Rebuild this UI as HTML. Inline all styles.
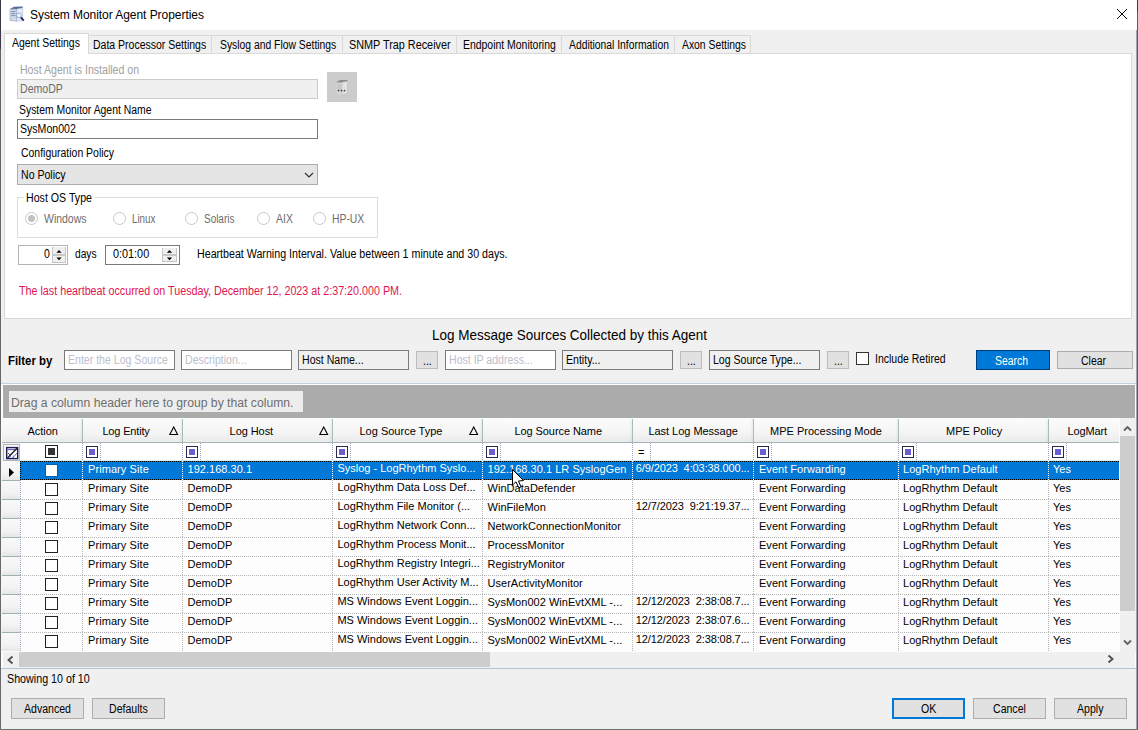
<!DOCTYPE html>
<html><head><meta charset="utf-8"><title>System Monitor Agent Properties</title>
<style>
html,body{margin:0;padding:0}
body{width:1138px;height:730px;position:relative;overflow:hidden;background:#f0f0f0;font-family:"Liberation Sans", sans-serif;font-size:11px;color:#000}
.a{position:absolute}
.t{line-height:1;white-space:nowrap}
.d{transform-origin:0 0}
</style></head><body>
<div class="a" style="left:0px;top:0px;width:1138px;height:30px;background:#ffffff;"></div>
<svg class="a" style="left:9px;top:6px" width="17" height="17" viewBox="0 0 17 17">
<path d="M1 3 L5 1 L13.7 0.8 L13.7 14.6 L7.5 15.2 L1 14.4 Z" fill="#dfe6f2"/>
<path d="M1 3 L5 0.8 L13.7 0.6 L13.7 2 L7.5 3.2 L1 3.2 Z" fill="#5a6a9c"/>
<path d="M7.5 3.2 L13.7 2 L13.7 14.6 L7.5 15.2 Z" fill="#e6ecf8" stroke="#b0bcd8" stroke-width="0.6"/>
<path d="M1 3.2 L7.5 3.2 L7.5 15.2 L1 14.4 Z" fill="#cfd8e8" stroke="#9aa6c4" stroke-width="0.6"/>
<path d="M2.2 5.5 L6.5 5.5 M2.2 7.6 L6.5 7.6 M2.2 9.6 L6.5 9.6" stroke="#7c86a8" stroke-width="0.9"/>
<circle cx="9.9" cy="9.3" r="2.4" fill="#e4fafa" stroke="#8090c0" stroke-width="0.7"/>
<path d="M11.8 11.4 L14.8 14.6" stroke="#202060" stroke-width="1.8"/>
</svg>
<div class="a t" style="left:30px;top:9px;font-size:12px;letter-spacing:-0.05px;">System Monitor Agent Properties</div>
<svg class="a" style="left:1116px;top:8px" width="12" height="12" viewBox="0 0 12 12"><path d="M1 1 L11 11 M11 1 L1 11" stroke="#000" stroke-width="1"/></svg>
<div class="a" style="left:88px;top:35px;width:124px;height:19px;box-sizing:border-box;border:1px solid #d9d9d9;border-left:none;background:#f0f0f0"></div>
<div class="a" style="left:212px;top:35px;width:131px;height:19px;box-sizing:border-box;border:1px solid #d9d9d9;border-left:none;background:#f0f0f0"></div>
<div class="a" style="left:343px;top:35px;width:114px;height:19px;box-sizing:border-box;border:1px solid #d9d9d9;border-left:none;background:#f0f0f0"></div>
<div class="a" style="left:457px;top:35px;width:105px;height:19px;box-sizing:border-box;border:1px solid #d9d9d9;border-left:none;background:#f0f0f0"></div>
<div class="a" style="left:562px;top:35px;width:113px;height:19px;box-sizing:border-box;border:1px solid #d9d9d9;border-left:none;background:#f0f0f0"></div>
<div class="a" style="left:675px;top:35px;width:76px;height:19px;box-sizing:border-box;border:1px solid #d9d9d9;border-left:none;background:#f0f0f0"></div>
<div class="a" style="left:4px;top:53px;width:1128px;height:266px;box-sizing:border-box;border:1px solid #d9d9d9;background:#fff"></div>
<div class="a" style="left:4px;top:33px;width:85px;height:21px;box-sizing:border-box;border:1px solid #d9d9d9;border-bottom:none;background:#fff"></div>
<div class="a t d" style="left:12.30px;top:37px;font-size:12px;transform:scaleX(0.8698);">Agent Settings</div>
<div class="a t d" style="left:93.40px;top:39px;font-size:12px;transform:scaleX(0.8748);">Data Processor Settings</div>
<div class="a t d" style="left:219.70px;top:39px;font-size:12px;transform:scaleX(0.8631);">Syslog and Flow Settings</div>
<div class="a t d" style="left:349.40px;top:39px;font-size:12px;transform:scaleX(0.9032);">SNMP Trap Receiver</div>
<div class="a t d" style="left:463.30px;top:39px;font-size:12px;transform:scaleX(0.8694);">Endpoint Monitoring</div>
<div class="a t d" style="left:568.90px;top:39px;font-size:12px;transform:scaleX(0.8606);">Additional Information</div>
<div class="a t d" style="left:682.00px;top:39px;font-size:12px;transform:scaleX(0.8643);">Axon Settings</div>
<div class="a t d" style="left:20.00px;top:64px;font-size:12px;transform:scaleX(0.8787);color:#a0a0a0;">Host Agent is Installed on</div>
<div class="a" style="left:17px;top:79px;width:301px;height:20px;background:#f0f0f0;box-sizing:border-box;border:1px solid #cccccc;"></div>
<div class="a t d" style="left:20.00px;top:83px;font-size:12px;transform:scaleX(0.8800);color:#6d6d6d;">DemoDP</div>
<div class="a" style="left:327px;top:72px;width:30px;height:30px;background:#cccccc;"></div>
<svg class="a" style="left:336px;top:79px" width="13" height="17" viewBox="0 0 13 17">
<path d="M0.5 3 L4 1 L11.5 1 L11.5 14.5 L6 16 L0.5 14.5 Z" fill="#d6d6d6"/>
<path d="M0.5 3 L4 1 L11.5 1 L11.5 2.2 L6 3.4 L0.5 3.4 Z" fill="#8c8c8c"/>
<path d="M6 3.4 L11.5 2.2 L11.5 14.5 L6 16 Z" fill="#e2e2e2" stroke="#b4b4b4" stroke-width="0.5"/>
<path d="M1.5 6 L5 6 M1.5 8 L5 8 M1.5 10 L5 10" stroke="#a8a8a8" stroke-width="0.7"/>
<circle cx="2.5" cy="11.6" r="0.9" fill="#4a3a3a"/><circle cx="5.5" cy="11.6" r="0.9" fill="#3a3a4a"/><circle cx="8.5" cy="11.6" r="0.9" fill="#4a3a3a"/>
</svg>
<div class="a t d" style="left:19.30px;top:104px;font-size:12px;transform:scaleX(0.8675);">System Monitor Agent Name</div>
<div class="a" style="left:17px;top:119px;width:301px;height:20px;background:#ffffff;box-sizing:border-box;border:1px solid #7a7a7a;"></div>
<div class="a t d" style="left:20.00px;top:123px;font-size:12px;transform:scaleX(0.8800);">SysMon002</div>
<div class="a t d" style="left:21.40px;top:147px;font-size:12px;transform:scaleX(0.8713);">Configuration Policy</div>
<div class="a" style="left:17px;top:164px;width:301px;height:21px;background:#e5e5e5;box-sizing:border-box;border:1px solid #adadad;"></div>
<div class="a t d" style="left:21.40px;top:169px;font-size:12px;transform:scaleX(0.8800);">No Policy</div>
<svg class="a" style="left:304px;top:172px" width="10" height="6" viewBox="0 0 10 6"><path d="M1 1 L5 5 L9 1" fill="none" stroke="#303030" stroke-width="1.2"/></svg>
<div class="a" style="left:17px;top:197px;width:361px;height:41px;box-sizing:border-box;border:1px solid #dcdcdc;"></div>
<div class="a" style="left:24px;top:190px;width:70px;height:12px;background:#fff"></div>
<div class="a t d" style="left:26.40px;top:192px;font-size:12px;transform:scaleX(0.8861);">Host OS Type</div>
<div class="a" style="left:24.9px;top:211.8px;width:13px;height:13px;box-sizing:border-box;border:1px solid #c8c8c8;border-radius:50%;background:#fff"></div>
<div class="a" style="left:27.9px;top:214.8px;width:7px;height:7px;border-radius:50%;background:#c2c2c2"></div>
<div class="a t d" style="left:44.20px;top:213px;font-size:12px;transform:scaleX(0.8729);color:#6d6d6d;">Windows</div>
<div class="a" style="left:112.9px;top:211.8px;width:13px;height:13px;box-sizing:border-box;border:1px solid #c8c8c8;border-radius:50%;background:#fff"></div>
<div class="a t d" style="left:132.40px;top:213px;font-size:12px;transform:scaleX(0.8157);color:#6d6d6d;">Linux</div>
<div class="a" style="left:184.9px;top:211.8px;width:13px;height:13px;box-sizing:border-box;border:1px solid #c8c8c8;border-radius:50%;background:#fff"></div>
<div class="a t d" style="left:204.00px;top:213px;font-size:12px;transform:scaleX(0.8286);color:#6d6d6d;">Solaris</div>
<div class="a" style="left:256.9px;top:211.8px;width:13px;height:13px;box-sizing:border-box;border:1px solid #c8c8c8;border-radius:50%;background:#fff"></div>
<div class="a t d" style="left:276.00px;top:213px;font-size:12px;transform:scaleX(0.8737);color:#6d6d6d;">AIX</div>
<div class="a" style="left:312.8px;top:211.8px;width:13px;height:13px;box-sizing:border-box;border:1px solid #c8c8c8;border-radius:50%;background:#fff"></div>
<div class="a t d" style="left:332.20px;top:213px;font-size:12px;transform:scaleX(0.8649);color:#6d6d6d;">HP-UX</div>
<div class="a" style="left:18px;top:245px;width:50px;height:20px;background:#fff;box-sizing:border-box;border:1px solid #b4b4b4;"></div>
<div class="a t d" style="left:44.12px;top:248px;font-size:12px;transform:scaleX(0.8800);">0</div>
<svg class="a" style="left:52px;top:247px" width="14" height="16" viewBox="0 0 14 16"><rect x="0" y="0" width="14" height="16" fill="#efefef"/><path d="M0.5 0 L0.5 16 M13.5 0 L13.5 16 M0 15.5 L14 15.5" stroke="#c4c4c4" stroke-width="1"/><rect x="0" y="7.0" width="14" height="2" fill="#c8c8c8"/><path d="M4.4 5.8 L7.0 3.0 L9.6 5.8 Z M4.4 10.4 L7.0 13.2 L9.6 10.4 Z" fill="#000"/></svg>
<div class="a t d" style="left:74.70px;top:248px;font-size:12px;transform:scaleX(0.8518);">days</div>
<div class="a" style="left:105px;top:245px;width:75px;height:20px;background:#fff;box-sizing:border-box;border:1px solid #7a7a7a;"></div>
<div class="a t d" style="left:112.50px;top:248px;font-size:12px;transform:scaleX(0.9039);">0:01:00</div>
<svg class="a" style="left:162px;top:248px" width="15" height="14" viewBox="0 0 15 14"><rect x="0" y="0" width="15" height="14" fill="#efefef"/><path d="M0.5 0 L0.5 14 M14.5 0 L14.5 14 M0 13.5 L15 13.5" stroke="#c4c4c4" stroke-width="1"/><rect x="0" y="6.0" width="15" height="2" fill="#c8c8c8"/><path d="M4.9 4.8 L7.5 2.0 L10.1 4.8 Z M4.9 9.4 L7.5 12.2 L10.1 9.4 Z" fill="#000"/></svg>
<div class="a t d" style="left:196.60px;top:248px;font-size:12px;transform:scaleX(0.8883);">Heartbeat Warning Interval. Value between 1 minute and 30 days.</div>
<div class="a t d" style="left:19.20px;top:285px;font-size:12px;transform:scaleX(0.8948);color:#e01450;">The last heartbeat occurred on Tuesday, December 12, 2023 at 2:37:20.000 PM.</div>
<div class="a t d" style="left:431.50px;top:328px;font-size:14.5px;transform:scaleX(0.9296);">Log Message Sources Collected by this Agent</div>
<div class="a t d" style="left:8.30px;top:355px;font-size:12px;transform:scaleX(0.9489);font-weight:bold;">Filter by</div>
<div class="a" style="left:64px;top:350px;width:111px;height:20px;background:#fff;box-sizing:border-box;border:1px solid #7a7a7a;"></div>
<div class="a t d" style="left:67.50px;top:354px;font-size:12px;transform:scaleX(0.8800);color:#bcc0cc;">Enter the Log Source</div>
<div class="a" style="left:181px;top:350px;width:111px;height:20px;background:#fff;box-sizing:border-box;border:1px solid #7a7a7a;"></div>
<div class="a t d" style="left:184.50px;top:354px;font-size:12px;transform:scaleX(0.8800);color:#bcc0cc;">Description...</div>
<div class="a" style="left:298px;top:350px;width:111px;height:20px;background:#f0f0f0;box-sizing:border-box;border:1px solid #7a7a7a;"></div>
<div class="a t d" style="left:301.50px;top:354px;font-size:12px;transform:scaleX(0.8800);">Host Name...</div>
<div class="a" style="left:416px;top:351px;width:22px;height:18px;background:#e1e1e1;box-sizing:border-box;border:1px solid #bdbdbd;"></div>
<div class="a t d" style="left:422.89px;top:355px;font-size:12px;transform:scaleX(0.8800);">...</div>
<div class="a" style="left:445px;top:350px;width:111px;height:20px;background:#fff;box-sizing:border-box;border:1px solid #7a7a7a;"></div>
<div class="a t d" style="left:448.50px;top:354px;font-size:12px;transform:scaleX(0.8800);color:#bcc0cc;">Host IP address...</div>
<div class="a" style="left:562px;top:350px;width:111px;height:20px;background:#f0f0f0;box-sizing:border-box;border:1px solid #7a7a7a;"></div>
<div class="a t d" style="left:565.50px;top:354px;font-size:12px;transform:scaleX(0.8800);">Entity...</div>
<div class="a" style="left:680px;top:351px;width:22px;height:18px;background:#e1e1e1;box-sizing:border-box;border:1px solid #bdbdbd;"></div>
<div class="a t d" style="left:686.89px;top:355px;font-size:12px;transform:scaleX(0.8800);">...</div>
<div class="a" style="left:709px;top:350px;width:111px;height:20px;background:#f0f0f0;box-sizing:border-box;border:1px solid #7a7a7a;"></div>
<div class="a t d" style="left:712.50px;top:354px;font-size:12px;transform:scaleX(0.8800);">Log Source Type...</div>
<div class="a" style="left:827px;top:351px;width:22px;height:18px;background:#e1e1e1;box-sizing:border-box;border:1px solid #bdbdbd;"></div>
<div class="a t d" style="left:833.89px;top:355px;font-size:12px;transform:scaleX(0.8800);">...</div>
<div class="a" style="left:856px;top:352px;width:13px;height:13px;background:#fff;box-sizing:border-box;border:1px solid #333;"></div>
<div class="a t d" style="left:875.40px;top:353px;font-size:12px;transform:scaleX(0.8746);">Include Retired</div>
<div class="a" style="left:976px;top:350px;width:74px;height:20px;background:#0078d7;box-sizing:border-box;border:1px solid #003e7a;"></div>
<div class="a t d" style="left:995.40px;top:355px;font-size:12px;transform:scaleX(0.8677);color:#fff;">Search</div>
<div class="a" style="left:1057px;top:351px;width:76px;height:18px;background:#e1e1e1;box-sizing:border-box;border:1px solid #adadad;"></div>
<div class="a t d" style="left:1081.00px;top:355px;font-size:12px;transform:scaleX(0.8715);">Clear</div>
<div class="a" style="left:1px;top:383px;width:1135px;height:1px;background:#c6d2dc"></div>
<div class="a" style="left:1px;top:384px;width:1135px;height:284px;background:#fdfdfd;"></div>
<div class="a" style="left:3px;top:385px;width:1132px;height:33px;background:#ababab;"></div>
<div class="a" style="left:9px;top:391px;width:294px;height:21px;background:#ededed;"></div>
<div class="a t d" style="left:11.30px;top:397px;font-size:12px;transform:scaleX(1.0156);color:#6d6d6d;">Drag a column header here to group by that column.</div>
<div class="a" style="left:2px;top:418px;width:1117px;height:25px;background:linear-gradient(#fcfcfc,#f5f5f5 60%,#eaeaea);box-sizing:border-box;border-bottom:1px solid #a4b6b6"></div>
<div class="a" style="left:79px;top:419px;width:3px;height:23px;background:linear-gradient(to right,rgba(0,0,0,0),rgba(0,0,0,0.05))"></div>
<div class="a" style="left:82px;top:419px;width:1px;height:23px;background:#a9bcbc"></div>
<div class="a" style="left:179px;top:419px;width:3px;height:23px;background:linear-gradient(to right,rgba(0,0,0,0),rgba(0,0,0,0.05))"></div>
<div class="a" style="left:182px;top:419px;width:1px;height:23px;background:#a9bcbc"></div>
<div class="a" style="left:329px;top:419px;width:3px;height:23px;background:linear-gradient(to right,rgba(0,0,0,0),rgba(0,0,0,0.05))"></div>
<div class="a" style="left:332px;top:419px;width:1px;height:23px;background:#a9bcbc"></div>
<div class="a" style="left:479px;top:419px;width:3px;height:23px;background:linear-gradient(to right,rgba(0,0,0,0),rgba(0,0,0,0.05))"></div>
<div class="a" style="left:482px;top:419px;width:1px;height:23px;background:#a9bcbc"></div>
<div class="a" style="left:629px;top:419px;width:3px;height:23px;background:linear-gradient(to right,rgba(0,0,0,0),rgba(0,0,0,0.05))"></div>
<div class="a" style="left:632px;top:419px;width:1px;height:23px;background:#a9bcbc"></div>
<div class="a" style="left:750px;top:419px;width:3px;height:23px;background:linear-gradient(to right,rgba(0,0,0,0),rgba(0,0,0,0.05))"></div>
<div class="a" style="left:753px;top:419px;width:1px;height:23px;background:#a9bcbc"></div>
<div class="a" style="left:895px;top:419px;width:3px;height:23px;background:linear-gradient(to right,rgba(0,0,0,0),rgba(0,0,0,0.05))"></div>
<div class="a" style="left:898px;top:419px;width:1px;height:23px;background:#a9bcbc"></div>
<div class="a" style="left:1045px;top:419px;width:3px;height:23px;background:linear-gradient(to right,rgba(0,0,0,0),rgba(0,0,0,0.05))"></div>
<div class="a" style="left:1048px;top:419px;width:1px;height:23px;background:#a9bcbc"></div>
<div class="a t" style="left:27.4px;top:426px;letter-spacing:0px;">Action</div>
<div class="a t" style="left:102.4px;top:426px;letter-spacing:-0.16px;">Log Entity</div>
<div class="a t" style="left:229.6px;top:426px;letter-spacing:-0.07px;">Log Host</div>
<div class="a t" style="left:359.5px;top:426px;letter-spacing:0px;">Log Source Type</div>
<div class="a t" style="left:514.4px;top:426px;letter-spacing:-0.07px;">Log Source Name</div>
<div class="a t" style="left:648.4px;top:426px;letter-spacing:-0.03px;">Last Log Message</div>
<div class="a t" style="left:770px;top:426px;letter-spacing:0px;">MPE Processing Mode</div>
<div class="a t" style="left:946px;top:426px;letter-spacing:0px;">MPE Policy</div>
<div class="a t" style="left:1067.6px;top:426px;letter-spacing:-0.14px;">LogMart</div>
<svg class="a" style="left:168.8px;top:426px" width="10" height="10" viewBox="0 0 10 10"><path d="M0.8 8.5 L4.7 1 L8.6 8.5 Z" fill="none" stroke="#000" stroke-width="1.1"/></svg>
<svg class="a" style="left:319px;top:426px" width="10" height="10" viewBox="0 0 10 10"><path d="M0.8 8.5 L4.7 1 L8.6 8.5 Z" fill="none" stroke="#000" stroke-width="1.1"/></svg>
<svg class="a" style="left:468.5px;top:426px" width="10" height="10" viewBox="0 0 10 10"><path d="M0.8 8.5 L4.7 1 L8.6 8.5 Z" fill="none" stroke="#000" stroke-width="1.1"/></svg>
<div class="a" style="left:3px;top:443px;width:1116px;height:18px;background:#ffffff;"></div>
<div class="a" style="left:1px;top:443px;width:19px;height:208px;background:#f4f4f4;"></div>
<svg class="a" style="left:3px;top:444px" width="17" height="17" viewBox="0 0 17 17">
<rect x="0.5" y="0.5" width="16" height="16" fill="#f6f6fa" stroke="#b4b4b4"/>
<rect x="3.7" y="3.6" width="11" height="11" fill="#fff" stroke="#1e1e50" stroke-width="1.4"/>
<path d="M4.4 5.6 L14 5.6" stroke="#5a5ac8" stroke-width="1.1"/>
<path d="M5 9 L7.5 11.5" stroke="#404040" stroke-width="0.9"/>
<path d="M4.6 14 L14.2 4" stroke="#202020" stroke-width="1.4"/>
<path d="M9.5 14 L14 9" stroke="#6a6ad0" stroke-width="1"/>
<path d="M7.2 14 L7.2 11.8 M10.2 14 L10.2 11.5" stroke="#6a6ad0" stroke-width="0.8"/>
</svg>
<div class="a" style="left:45px;top:445px;width:13px;height:13px;box-sizing:border-box;border:1px solid #222;background:#fff"></div>
<div class="a" style="left:48px;top:448px;width:7px;height:7px;background:#333"></div>
<div class="a" style="left:82px;top:443px;width:1px;height:18px;background:repeating-linear-gradient(to bottom,#9aa8b8 0 1px,transparent 1px 2px)"></div>
<div class="a" style="left:86px;top:446px;width:12px;height:12px;box-sizing:border-box;border:1px solid #2a2a4a;background:#fff"></div>
<div class="a" style="left:89px;top:449px;width:6px;height:6px;background:#6a5fd0"></div>
<div class="a" style="left:100px;top:443px;width:1px;height:18px;background:repeating-linear-gradient(to bottom,#9aa8b8 0 1px,transparent 1px 2px)"></div>
<div class="a" style="left:182px;top:443px;width:1px;height:18px;background:repeating-linear-gradient(to bottom,#9aa8b8 0 1px,transparent 1px 2px)"></div>
<div class="a" style="left:186px;top:446px;width:12px;height:12px;box-sizing:border-box;border:1px solid #2a2a4a;background:#fff"></div>
<div class="a" style="left:189px;top:449px;width:6px;height:6px;background:#6a5fd0"></div>
<div class="a" style="left:200px;top:443px;width:1px;height:18px;background:repeating-linear-gradient(to bottom,#9aa8b8 0 1px,transparent 1px 2px)"></div>
<div class="a" style="left:332px;top:443px;width:1px;height:18px;background:repeating-linear-gradient(to bottom,#9aa8b8 0 1px,transparent 1px 2px)"></div>
<div class="a" style="left:336px;top:446px;width:12px;height:12px;box-sizing:border-box;border:1px solid #2a2a4a;background:#fff"></div>
<div class="a" style="left:339px;top:449px;width:6px;height:6px;background:#6a5fd0"></div>
<div class="a" style="left:350px;top:443px;width:1px;height:18px;background:repeating-linear-gradient(to bottom,#9aa8b8 0 1px,transparent 1px 2px)"></div>
<div class="a" style="left:482px;top:443px;width:1px;height:18px;background:repeating-linear-gradient(to bottom,#9aa8b8 0 1px,transparent 1px 2px)"></div>
<div class="a" style="left:486px;top:446px;width:12px;height:12px;box-sizing:border-box;border:1px solid #2a2a4a;background:#fff"></div>
<div class="a" style="left:489px;top:449px;width:6px;height:6px;background:#6a5fd0"></div>
<div class="a" style="left:500px;top:443px;width:1px;height:18px;background:repeating-linear-gradient(to bottom,#9aa8b8 0 1px,transparent 1px 2px)"></div>
<div class="a" style="left:632px;top:443px;width:1px;height:18px;background:repeating-linear-gradient(to bottom,#9aa8b8 0 1px,transparent 1px 2px)"></div>
<div class="a t" style="left:638px;top:447px;letter-spacing:0px;">=</div>
<div class="a" style="left:650px;top:443px;width:1px;height:18px;background:repeating-linear-gradient(to bottom,#9aa8b8 0 1px,transparent 1px 2px)"></div>
<div class="a" style="left:753px;top:443px;width:1px;height:18px;background:repeating-linear-gradient(to bottom,#9aa8b8 0 1px,transparent 1px 2px)"></div>
<div class="a" style="left:757px;top:446px;width:12px;height:12px;box-sizing:border-box;border:1px solid #2a2a4a;background:#fff"></div>
<div class="a" style="left:760px;top:449px;width:6px;height:6px;background:#6a5fd0"></div>
<div class="a" style="left:771px;top:443px;width:1px;height:18px;background:repeating-linear-gradient(to bottom,#9aa8b8 0 1px,transparent 1px 2px)"></div>
<div class="a" style="left:898px;top:443px;width:1px;height:18px;background:repeating-linear-gradient(to bottom,#9aa8b8 0 1px,transparent 1px 2px)"></div>
<div class="a" style="left:902px;top:446px;width:12px;height:12px;box-sizing:border-box;border:1px solid #2a2a4a;background:#fff"></div>
<div class="a" style="left:905px;top:449px;width:6px;height:6px;background:#6a5fd0"></div>
<div class="a" style="left:916px;top:443px;width:1px;height:18px;background:repeating-linear-gradient(to bottom,#9aa8b8 0 1px,transparent 1px 2px)"></div>
<div class="a" style="left:1048px;top:443px;width:1px;height:18px;background:repeating-linear-gradient(to bottom,#9aa8b8 0 1px,transparent 1px 2px)"></div>
<div class="a" style="left:1052px;top:446px;width:12px;height:12px;box-sizing:border-box;border:1px solid #2a2a4a;background:#fff"></div>
<div class="a" style="left:1055px;top:449px;width:6px;height:6px;background:#6a5fd0"></div>
<div class="a" style="left:1066px;top:443px;width:1px;height:18px;background:repeating-linear-gradient(to bottom,#9aa8b8 0 1px,transparent 1px 2px)"></div>
<div class="a" style="left:20px;top:460px;width:1099px;height:1px;background:#d4f0fc"></div>
<div class="a" style="left:2px;top:461px;width:18px;height:19px;background:linear-gradient(#fafafa,#f2f2f2 70%,#e6e6e6)"></div>
<svg class="a" style="left:9px;top:468px" width="6" height="9" viewBox="0 0 6 9"><path d="M0 0 L5 4.5 L0 9 Z" fill="#000"/></svg>
<div class="a" style="left:20px;top:461px;width:1099px;height:19px;background:#0078d7"></div>
<div class="a" style="left:20px;top:461px;width:1099px;height:1px;background:repeating-linear-gradient(to right,#000 0 1px,transparent 1px 2px)"></div>
<div class="a" style="left:20px;top:479px;width:1099px;height:1px;background:repeating-linear-gradient(to right,#000 0 1px,transparent 1px 2px)"></div>
<div class="a" style="left:20px;top:461px;width:1px;height:19px;background:repeating-linear-gradient(to bottom,#000 0 1px,transparent 1px 2px)"></div>
<div class="a" style="left:82px;top:461px;width:1px;height:19px;background:repeating-linear-gradient(to bottom,#fff 0 1px,transparent 1px 2px)"></div>
<div class="a" style="left:182px;top:461px;width:1px;height:19px;background:repeating-linear-gradient(to bottom,#fff 0 1px,transparent 1px 2px)"></div>
<div class="a" style="left:332px;top:461px;width:1px;height:19px;background:repeating-linear-gradient(to bottom,#fff 0 1px,transparent 1px 2px)"></div>
<div class="a" style="left:482px;top:461px;width:1px;height:19px;background:repeating-linear-gradient(to bottom,#fff 0 1px,transparent 1px 2px)"></div>
<div class="a" style="left:632px;top:461px;width:1px;height:19px;background:repeating-linear-gradient(to bottom,#fff 0 1px,transparent 1px 2px)"></div>
<div class="a" style="left:753px;top:461px;width:1px;height:19px;background:repeating-linear-gradient(to bottom,#fff 0 1px,transparent 1px 2px)"></div>
<div class="a" style="left:898px;top:461px;width:1px;height:19px;background:repeating-linear-gradient(to bottom,#fff 0 1px,transparent 1px 2px)"></div>
<div class="a" style="left:1048px;top:461px;width:1px;height:19px;background:repeating-linear-gradient(to bottom,#fff 0 1px,transparent 1px 2px)"></div>
<div class="a" style="left:45px;top:464px;width:13px;height:13px;box-sizing:border-box;border:1px solid #0060b0;background:#fff"></div>
<div class="a t" style="left:88px;top:464px;color:#fff;letter-spacing:0.08px;">Primary Site</div>
<div class="a t" style="left:187.5px;top:464px;color:#fff;letter-spacing:0.03px;">192.168.30.1</div>
<div class="a t" style="left:337.4px;top:463px;color:#fff;letter-spacing:0px;">Syslog - LogRhythm Syslo...</div>
<div class="a t" style="left:487.5px;top:464px;color:#fff;letter-spacing:0.03px;">192.168.30.1 LR SyslogGen</div>
<div class="a t" style="left:635.7px;top:463px;color:#fff;letter-spacing:-0.1px;">6/9/2023&nbsp; 4:03:38.000...</div>
<div class="a t" style="left:759px;top:464px;color:#fff;letter-spacing:0.03px;">Event Forwarding</div>
<div class="a t" style="left:903px;top:464px;color:#fff;letter-spacing:0.03px;">LogRhythm Default</div>
<div class="a t" style="left:1053px;top:464px;color:#fff;letter-spacing:0.03px;">Yes</div>
<div class="a" style="left:2px;top:480px;width:18px;height:19px;background:linear-gradient(#fafafa,#f2f2f2 70%,#e6e6e6)"></div>
<div class="a" style="left:2px;top:480px;width:18px;height:1px;background:#9fb2b2"></div>
<div class="a" style="left:20px;top:480px;width:1px;height:19px;background:repeating-linear-gradient(to bottom,#a0a8c0 0 1px,transparent 1px 2px)"></div>
<div class="a" style="left:20px;top:499px;width:1099px;height:1px;background:repeating-linear-gradient(to right,#b4b4b4 0 1px,transparent 1px 2px)"></div>
<div class="a" style="left:82px;top:480px;width:1px;height:19px;background:repeating-linear-gradient(to bottom,#b4b4b4 0 1px,transparent 1px 2px)"></div>
<div class="a" style="left:182px;top:480px;width:1px;height:19px;background:repeating-linear-gradient(to bottom,#b4b4b4 0 1px,transparent 1px 2px)"></div>
<div class="a" style="left:332px;top:480px;width:1px;height:19px;background:repeating-linear-gradient(to bottom,#b4b4b4 0 1px,transparent 1px 2px)"></div>
<div class="a" style="left:482px;top:480px;width:1px;height:19px;background:repeating-linear-gradient(to bottom,#b4b4b4 0 1px,transparent 1px 2px)"></div>
<div class="a" style="left:632px;top:480px;width:1px;height:19px;background:repeating-linear-gradient(to bottom,#b4b4b4 0 1px,transparent 1px 2px)"></div>
<div class="a" style="left:753px;top:480px;width:1px;height:19px;background:repeating-linear-gradient(to bottom,#b4b4b4 0 1px,transparent 1px 2px)"></div>
<div class="a" style="left:898px;top:480px;width:1px;height:19px;background:repeating-linear-gradient(to bottom,#b4b4b4 0 1px,transparent 1px 2px)"></div>
<div class="a" style="left:1048px;top:480px;width:1px;height:19px;background:repeating-linear-gradient(to bottom,#b4b4b4 0 1px,transparent 1px 2px)"></div>
<div class="a" style="left:45px;top:483px;width:13px;height:13px;box-sizing:border-box;border:1px solid #222;background:#fff"></div>
<div class="a t" style="left:88px;top:483px;letter-spacing:0.08px;">Primary Site</div>
<div class="a t" style="left:187.5px;top:483px;letter-spacing:0.03px;">DemoDP</div>
<div class="a t" style="left:337.4px;top:482px;letter-spacing:0px;">LogRhythm Data Loss Def...</div>
<div class="a t" style="left:487.5px;top:483px;letter-spacing:0.03px;">WinDataDefender</div>
<div class="a t" style="left:759px;top:483px;letter-spacing:0.03px;">Event Forwarding</div>
<div class="a t" style="left:903px;top:483px;letter-spacing:0.03px;">LogRhythm Default</div>
<div class="a t" style="left:1053px;top:483px;letter-spacing:0.03px;">Yes</div>
<div class="a" style="left:2px;top:499px;width:18px;height:19px;background:linear-gradient(#fafafa,#f2f2f2 70%,#e6e6e6)"></div>
<div class="a" style="left:2px;top:499px;width:18px;height:1px;background:#9fb2b2"></div>
<div class="a" style="left:20px;top:499px;width:1px;height:19px;background:repeating-linear-gradient(to bottom,#a0a8c0 0 1px,transparent 1px 2px)"></div>
<div class="a" style="left:20px;top:518px;width:1099px;height:1px;background:repeating-linear-gradient(to right,#b4b4b4 0 1px,transparent 1px 2px)"></div>
<div class="a" style="left:82px;top:499px;width:1px;height:19px;background:repeating-linear-gradient(to bottom,#b4b4b4 0 1px,transparent 1px 2px)"></div>
<div class="a" style="left:182px;top:499px;width:1px;height:19px;background:repeating-linear-gradient(to bottom,#b4b4b4 0 1px,transparent 1px 2px)"></div>
<div class="a" style="left:332px;top:499px;width:1px;height:19px;background:repeating-linear-gradient(to bottom,#b4b4b4 0 1px,transparent 1px 2px)"></div>
<div class="a" style="left:482px;top:499px;width:1px;height:19px;background:repeating-linear-gradient(to bottom,#b4b4b4 0 1px,transparent 1px 2px)"></div>
<div class="a" style="left:632px;top:499px;width:1px;height:19px;background:repeating-linear-gradient(to bottom,#b4b4b4 0 1px,transparent 1px 2px)"></div>
<div class="a" style="left:753px;top:499px;width:1px;height:19px;background:repeating-linear-gradient(to bottom,#b4b4b4 0 1px,transparent 1px 2px)"></div>
<div class="a" style="left:898px;top:499px;width:1px;height:19px;background:repeating-linear-gradient(to bottom,#b4b4b4 0 1px,transparent 1px 2px)"></div>
<div class="a" style="left:1048px;top:499px;width:1px;height:19px;background:repeating-linear-gradient(to bottom,#b4b4b4 0 1px,transparent 1px 2px)"></div>
<div class="a" style="left:45px;top:502px;width:13px;height:13px;box-sizing:border-box;border:1px solid #222;background:#fff"></div>
<div class="a t" style="left:88px;top:502px;letter-spacing:0.08px;">Primary Site</div>
<div class="a t" style="left:187.5px;top:502px;letter-spacing:0.03px;">DemoDP</div>
<div class="a t" style="left:337.4px;top:501px;letter-spacing:0px;">LogRhythm File Monitor (...</div>
<div class="a t" style="left:487.5px;top:502px;letter-spacing:0.03px;">WinFileMon</div>
<div class="a t" style="left:635.7px;top:501px;letter-spacing:-0.1px;">12/7/2023&nbsp; 9:21:19.37...</div>
<div class="a t" style="left:759px;top:502px;letter-spacing:0.03px;">Event Forwarding</div>
<div class="a t" style="left:903px;top:502px;letter-spacing:0.03px;">LogRhythm Default</div>
<div class="a t" style="left:1053px;top:502px;letter-spacing:0.03px;">Yes</div>
<div class="a" style="left:2px;top:518px;width:18px;height:19px;background:linear-gradient(#fafafa,#f2f2f2 70%,#e6e6e6)"></div>
<div class="a" style="left:2px;top:518px;width:18px;height:1px;background:#9fb2b2"></div>
<div class="a" style="left:20px;top:518px;width:1px;height:19px;background:repeating-linear-gradient(to bottom,#a0a8c0 0 1px,transparent 1px 2px)"></div>
<div class="a" style="left:20px;top:537px;width:1099px;height:1px;background:repeating-linear-gradient(to right,#b4b4b4 0 1px,transparent 1px 2px)"></div>
<div class="a" style="left:82px;top:518px;width:1px;height:19px;background:repeating-linear-gradient(to bottom,#b4b4b4 0 1px,transparent 1px 2px)"></div>
<div class="a" style="left:182px;top:518px;width:1px;height:19px;background:repeating-linear-gradient(to bottom,#b4b4b4 0 1px,transparent 1px 2px)"></div>
<div class="a" style="left:332px;top:518px;width:1px;height:19px;background:repeating-linear-gradient(to bottom,#b4b4b4 0 1px,transparent 1px 2px)"></div>
<div class="a" style="left:482px;top:518px;width:1px;height:19px;background:repeating-linear-gradient(to bottom,#b4b4b4 0 1px,transparent 1px 2px)"></div>
<div class="a" style="left:632px;top:518px;width:1px;height:19px;background:repeating-linear-gradient(to bottom,#b4b4b4 0 1px,transparent 1px 2px)"></div>
<div class="a" style="left:753px;top:518px;width:1px;height:19px;background:repeating-linear-gradient(to bottom,#b4b4b4 0 1px,transparent 1px 2px)"></div>
<div class="a" style="left:898px;top:518px;width:1px;height:19px;background:repeating-linear-gradient(to bottom,#b4b4b4 0 1px,transparent 1px 2px)"></div>
<div class="a" style="left:1048px;top:518px;width:1px;height:19px;background:repeating-linear-gradient(to bottom,#b4b4b4 0 1px,transparent 1px 2px)"></div>
<div class="a" style="left:45px;top:521px;width:13px;height:13px;box-sizing:border-box;border:1px solid #222;background:#fff"></div>
<div class="a t" style="left:88px;top:521px;letter-spacing:0.08px;">Primary Site</div>
<div class="a t" style="left:187.5px;top:521px;letter-spacing:0.03px;">DemoDP</div>
<div class="a t" style="left:337.4px;top:520px;letter-spacing:0px;">LogRhythm Network Conn...</div>
<div class="a t" style="left:487.5px;top:521px;letter-spacing:0.03px;">NetworkConnectionMonitor</div>
<div class="a t" style="left:759px;top:521px;letter-spacing:0.03px;">Event Forwarding</div>
<div class="a t" style="left:903px;top:521px;letter-spacing:0.03px;">LogRhythm Default</div>
<div class="a t" style="left:1053px;top:521px;letter-spacing:0.03px;">Yes</div>
<div class="a" style="left:2px;top:537px;width:18px;height:19px;background:linear-gradient(#fafafa,#f2f2f2 70%,#e6e6e6)"></div>
<div class="a" style="left:2px;top:537px;width:18px;height:1px;background:#9fb2b2"></div>
<div class="a" style="left:20px;top:537px;width:1px;height:19px;background:repeating-linear-gradient(to bottom,#a0a8c0 0 1px,transparent 1px 2px)"></div>
<div class="a" style="left:20px;top:556px;width:1099px;height:1px;background:repeating-linear-gradient(to right,#b4b4b4 0 1px,transparent 1px 2px)"></div>
<div class="a" style="left:82px;top:537px;width:1px;height:19px;background:repeating-linear-gradient(to bottom,#b4b4b4 0 1px,transparent 1px 2px)"></div>
<div class="a" style="left:182px;top:537px;width:1px;height:19px;background:repeating-linear-gradient(to bottom,#b4b4b4 0 1px,transparent 1px 2px)"></div>
<div class="a" style="left:332px;top:537px;width:1px;height:19px;background:repeating-linear-gradient(to bottom,#b4b4b4 0 1px,transparent 1px 2px)"></div>
<div class="a" style="left:482px;top:537px;width:1px;height:19px;background:repeating-linear-gradient(to bottom,#b4b4b4 0 1px,transparent 1px 2px)"></div>
<div class="a" style="left:632px;top:537px;width:1px;height:19px;background:repeating-linear-gradient(to bottom,#b4b4b4 0 1px,transparent 1px 2px)"></div>
<div class="a" style="left:753px;top:537px;width:1px;height:19px;background:repeating-linear-gradient(to bottom,#b4b4b4 0 1px,transparent 1px 2px)"></div>
<div class="a" style="left:898px;top:537px;width:1px;height:19px;background:repeating-linear-gradient(to bottom,#b4b4b4 0 1px,transparent 1px 2px)"></div>
<div class="a" style="left:1048px;top:537px;width:1px;height:19px;background:repeating-linear-gradient(to bottom,#b4b4b4 0 1px,transparent 1px 2px)"></div>
<div class="a" style="left:45px;top:540px;width:13px;height:13px;box-sizing:border-box;border:1px solid #222;background:#fff"></div>
<div class="a t" style="left:88px;top:540px;letter-spacing:0.08px;">Primary Site</div>
<div class="a t" style="left:187.5px;top:540px;letter-spacing:0.03px;">DemoDP</div>
<div class="a t" style="left:337.4px;top:539px;letter-spacing:0px;">LogRhythm Process Monit...</div>
<div class="a t" style="left:487.5px;top:540px;letter-spacing:0.03px;">ProcessMonitor</div>
<div class="a t" style="left:759px;top:540px;letter-spacing:0.03px;">Event Forwarding</div>
<div class="a t" style="left:903px;top:540px;letter-spacing:0.03px;">LogRhythm Default</div>
<div class="a t" style="left:1053px;top:540px;letter-spacing:0.03px;">Yes</div>
<div class="a" style="left:2px;top:556px;width:18px;height:19px;background:linear-gradient(#fafafa,#f2f2f2 70%,#e6e6e6)"></div>
<div class="a" style="left:2px;top:556px;width:18px;height:1px;background:#9fb2b2"></div>
<div class="a" style="left:20px;top:556px;width:1px;height:19px;background:repeating-linear-gradient(to bottom,#a0a8c0 0 1px,transparent 1px 2px)"></div>
<div class="a" style="left:20px;top:575px;width:1099px;height:1px;background:repeating-linear-gradient(to right,#b4b4b4 0 1px,transparent 1px 2px)"></div>
<div class="a" style="left:82px;top:556px;width:1px;height:19px;background:repeating-linear-gradient(to bottom,#b4b4b4 0 1px,transparent 1px 2px)"></div>
<div class="a" style="left:182px;top:556px;width:1px;height:19px;background:repeating-linear-gradient(to bottom,#b4b4b4 0 1px,transparent 1px 2px)"></div>
<div class="a" style="left:332px;top:556px;width:1px;height:19px;background:repeating-linear-gradient(to bottom,#b4b4b4 0 1px,transparent 1px 2px)"></div>
<div class="a" style="left:482px;top:556px;width:1px;height:19px;background:repeating-linear-gradient(to bottom,#b4b4b4 0 1px,transparent 1px 2px)"></div>
<div class="a" style="left:632px;top:556px;width:1px;height:19px;background:repeating-linear-gradient(to bottom,#b4b4b4 0 1px,transparent 1px 2px)"></div>
<div class="a" style="left:753px;top:556px;width:1px;height:19px;background:repeating-linear-gradient(to bottom,#b4b4b4 0 1px,transparent 1px 2px)"></div>
<div class="a" style="left:898px;top:556px;width:1px;height:19px;background:repeating-linear-gradient(to bottom,#b4b4b4 0 1px,transparent 1px 2px)"></div>
<div class="a" style="left:1048px;top:556px;width:1px;height:19px;background:repeating-linear-gradient(to bottom,#b4b4b4 0 1px,transparent 1px 2px)"></div>
<div class="a" style="left:45px;top:559px;width:13px;height:13px;box-sizing:border-box;border:1px solid #222;background:#fff"></div>
<div class="a t" style="left:88px;top:559px;letter-spacing:0.08px;">Primary Site</div>
<div class="a t" style="left:187.5px;top:559px;letter-spacing:0.03px;">DemoDP</div>
<div class="a t" style="left:337.4px;top:558px;letter-spacing:0px;">LogRhythm Registry Integri...</div>
<div class="a t" style="left:487.5px;top:559px;letter-spacing:0.03px;">RegistryMonitor</div>
<div class="a t" style="left:759px;top:559px;letter-spacing:0.03px;">Event Forwarding</div>
<div class="a t" style="left:903px;top:559px;letter-spacing:0.03px;">LogRhythm Default</div>
<div class="a t" style="left:1053px;top:559px;letter-spacing:0.03px;">Yes</div>
<div class="a" style="left:2px;top:575px;width:18px;height:19px;background:linear-gradient(#fafafa,#f2f2f2 70%,#e6e6e6)"></div>
<div class="a" style="left:2px;top:575px;width:18px;height:1px;background:#9fb2b2"></div>
<div class="a" style="left:20px;top:575px;width:1px;height:19px;background:repeating-linear-gradient(to bottom,#a0a8c0 0 1px,transparent 1px 2px)"></div>
<div class="a" style="left:20px;top:594px;width:1099px;height:1px;background:repeating-linear-gradient(to right,#b4b4b4 0 1px,transparent 1px 2px)"></div>
<div class="a" style="left:82px;top:575px;width:1px;height:19px;background:repeating-linear-gradient(to bottom,#b4b4b4 0 1px,transparent 1px 2px)"></div>
<div class="a" style="left:182px;top:575px;width:1px;height:19px;background:repeating-linear-gradient(to bottom,#b4b4b4 0 1px,transparent 1px 2px)"></div>
<div class="a" style="left:332px;top:575px;width:1px;height:19px;background:repeating-linear-gradient(to bottom,#b4b4b4 0 1px,transparent 1px 2px)"></div>
<div class="a" style="left:482px;top:575px;width:1px;height:19px;background:repeating-linear-gradient(to bottom,#b4b4b4 0 1px,transparent 1px 2px)"></div>
<div class="a" style="left:632px;top:575px;width:1px;height:19px;background:repeating-linear-gradient(to bottom,#b4b4b4 0 1px,transparent 1px 2px)"></div>
<div class="a" style="left:753px;top:575px;width:1px;height:19px;background:repeating-linear-gradient(to bottom,#b4b4b4 0 1px,transparent 1px 2px)"></div>
<div class="a" style="left:898px;top:575px;width:1px;height:19px;background:repeating-linear-gradient(to bottom,#b4b4b4 0 1px,transparent 1px 2px)"></div>
<div class="a" style="left:1048px;top:575px;width:1px;height:19px;background:repeating-linear-gradient(to bottom,#b4b4b4 0 1px,transparent 1px 2px)"></div>
<div class="a" style="left:45px;top:578px;width:13px;height:13px;box-sizing:border-box;border:1px solid #222;background:#fff"></div>
<div class="a t" style="left:88px;top:578px;letter-spacing:0.08px;">Primary Site</div>
<div class="a t" style="left:187.5px;top:578px;letter-spacing:0.03px;">DemoDP</div>
<div class="a t" style="left:337.4px;top:577px;letter-spacing:0px;">LogRhythm User Activity M...</div>
<div class="a t" style="left:487.5px;top:578px;letter-spacing:0.03px;">UserActivityMonitor</div>
<div class="a t" style="left:759px;top:578px;letter-spacing:0.03px;">Event Forwarding</div>
<div class="a t" style="left:903px;top:578px;letter-spacing:0.03px;">LogRhythm Default</div>
<div class="a t" style="left:1053px;top:578px;letter-spacing:0.03px;">Yes</div>
<div class="a" style="left:2px;top:594px;width:18px;height:19px;background:linear-gradient(#fafafa,#f2f2f2 70%,#e6e6e6)"></div>
<div class="a" style="left:2px;top:594px;width:18px;height:1px;background:#9fb2b2"></div>
<div class="a" style="left:20px;top:594px;width:1px;height:19px;background:repeating-linear-gradient(to bottom,#a0a8c0 0 1px,transparent 1px 2px)"></div>
<div class="a" style="left:20px;top:613px;width:1099px;height:1px;background:repeating-linear-gradient(to right,#b4b4b4 0 1px,transparent 1px 2px)"></div>
<div class="a" style="left:82px;top:594px;width:1px;height:19px;background:repeating-linear-gradient(to bottom,#b4b4b4 0 1px,transparent 1px 2px)"></div>
<div class="a" style="left:182px;top:594px;width:1px;height:19px;background:repeating-linear-gradient(to bottom,#b4b4b4 0 1px,transparent 1px 2px)"></div>
<div class="a" style="left:332px;top:594px;width:1px;height:19px;background:repeating-linear-gradient(to bottom,#b4b4b4 0 1px,transparent 1px 2px)"></div>
<div class="a" style="left:482px;top:594px;width:1px;height:19px;background:repeating-linear-gradient(to bottom,#b4b4b4 0 1px,transparent 1px 2px)"></div>
<div class="a" style="left:632px;top:594px;width:1px;height:19px;background:repeating-linear-gradient(to bottom,#b4b4b4 0 1px,transparent 1px 2px)"></div>
<div class="a" style="left:753px;top:594px;width:1px;height:19px;background:repeating-linear-gradient(to bottom,#b4b4b4 0 1px,transparent 1px 2px)"></div>
<div class="a" style="left:898px;top:594px;width:1px;height:19px;background:repeating-linear-gradient(to bottom,#b4b4b4 0 1px,transparent 1px 2px)"></div>
<div class="a" style="left:1048px;top:594px;width:1px;height:19px;background:repeating-linear-gradient(to bottom,#b4b4b4 0 1px,transparent 1px 2px)"></div>
<div class="a" style="left:45px;top:597px;width:13px;height:13px;box-sizing:border-box;border:1px solid #222;background:#fff"></div>
<div class="a t" style="left:88px;top:597px;letter-spacing:0.08px;">Primary Site</div>
<div class="a t" style="left:187.5px;top:597px;letter-spacing:0.03px;">DemoDP</div>
<div class="a t" style="left:337.4px;top:596px;letter-spacing:0px;">MS Windows Event Loggin...</div>
<div class="a t" style="left:487.5px;top:597px;letter-spacing:0.03px;">SysMon002 WinEvtXML -...</div>
<div class="a t" style="left:635.7px;top:596px;letter-spacing:-0.1px;">12/12/2023&nbsp; 2:38:08.7...</div>
<div class="a t" style="left:759px;top:597px;letter-spacing:0.03px;">Event Forwarding</div>
<div class="a t" style="left:903px;top:597px;letter-spacing:0.03px;">LogRhythm Default</div>
<div class="a t" style="left:1053px;top:597px;letter-spacing:0.03px;">Yes</div>
<div class="a" style="left:2px;top:613px;width:18px;height:19px;background:linear-gradient(#fafafa,#f2f2f2 70%,#e6e6e6)"></div>
<div class="a" style="left:2px;top:613px;width:18px;height:1px;background:#9fb2b2"></div>
<div class="a" style="left:20px;top:613px;width:1px;height:19px;background:repeating-linear-gradient(to bottom,#a0a8c0 0 1px,transparent 1px 2px)"></div>
<div class="a" style="left:20px;top:632px;width:1099px;height:1px;background:repeating-linear-gradient(to right,#b4b4b4 0 1px,transparent 1px 2px)"></div>
<div class="a" style="left:82px;top:613px;width:1px;height:19px;background:repeating-linear-gradient(to bottom,#b4b4b4 0 1px,transparent 1px 2px)"></div>
<div class="a" style="left:182px;top:613px;width:1px;height:19px;background:repeating-linear-gradient(to bottom,#b4b4b4 0 1px,transparent 1px 2px)"></div>
<div class="a" style="left:332px;top:613px;width:1px;height:19px;background:repeating-linear-gradient(to bottom,#b4b4b4 0 1px,transparent 1px 2px)"></div>
<div class="a" style="left:482px;top:613px;width:1px;height:19px;background:repeating-linear-gradient(to bottom,#b4b4b4 0 1px,transparent 1px 2px)"></div>
<div class="a" style="left:632px;top:613px;width:1px;height:19px;background:repeating-linear-gradient(to bottom,#b4b4b4 0 1px,transparent 1px 2px)"></div>
<div class="a" style="left:753px;top:613px;width:1px;height:19px;background:repeating-linear-gradient(to bottom,#b4b4b4 0 1px,transparent 1px 2px)"></div>
<div class="a" style="left:898px;top:613px;width:1px;height:19px;background:repeating-linear-gradient(to bottom,#b4b4b4 0 1px,transparent 1px 2px)"></div>
<div class="a" style="left:1048px;top:613px;width:1px;height:19px;background:repeating-linear-gradient(to bottom,#b4b4b4 0 1px,transparent 1px 2px)"></div>
<div class="a" style="left:45px;top:616px;width:13px;height:13px;box-sizing:border-box;border:1px solid #222;background:#fff"></div>
<div class="a t" style="left:88px;top:616px;letter-spacing:0.08px;">Primary Site</div>
<div class="a t" style="left:187.5px;top:616px;letter-spacing:0.03px;">DemoDP</div>
<div class="a t" style="left:337.4px;top:615px;letter-spacing:0px;">MS Windows Event Loggin...</div>
<div class="a t" style="left:487.5px;top:616px;letter-spacing:0.03px;">SysMon002 WinEvtXML -...</div>
<div class="a t" style="left:635.7px;top:615px;letter-spacing:-0.1px;">12/12/2023&nbsp; 2:38:07.6...</div>
<div class="a t" style="left:759px;top:616px;letter-spacing:0.03px;">Event Forwarding</div>
<div class="a t" style="left:903px;top:616px;letter-spacing:0.03px;">LogRhythm Default</div>
<div class="a t" style="left:1053px;top:616px;letter-spacing:0.03px;">Yes</div>
<div class="a" style="left:2px;top:632px;width:18px;height:19px;background:linear-gradient(#fafafa,#f2f2f2 70%,#e6e6e6)"></div>
<div class="a" style="left:2px;top:632px;width:18px;height:1px;background:#9fb2b2"></div>
<div class="a" style="left:20px;top:632px;width:1px;height:19px;background:repeating-linear-gradient(to bottom,#a0a8c0 0 1px,transparent 1px 2px)"></div>
<div class="a" style="left:82px;top:632px;width:1px;height:19px;background:repeating-linear-gradient(to bottom,#b4b4b4 0 1px,transparent 1px 2px)"></div>
<div class="a" style="left:182px;top:632px;width:1px;height:19px;background:repeating-linear-gradient(to bottom,#b4b4b4 0 1px,transparent 1px 2px)"></div>
<div class="a" style="left:332px;top:632px;width:1px;height:19px;background:repeating-linear-gradient(to bottom,#b4b4b4 0 1px,transparent 1px 2px)"></div>
<div class="a" style="left:482px;top:632px;width:1px;height:19px;background:repeating-linear-gradient(to bottom,#b4b4b4 0 1px,transparent 1px 2px)"></div>
<div class="a" style="left:632px;top:632px;width:1px;height:19px;background:repeating-linear-gradient(to bottom,#b4b4b4 0 1px,transparent 1px 2px)"></div>
<div class="a" style="left:753px;top:632px;width:1px;height:19px;background:repeating-linear-gradient(to bottom,#b4b4b4 0 1px,transparent 1px 2px)"></div>
<div class="a" style="left:898px;top:632px;width:1px;height:19px;background:repeating-linear-gradient(to bottom,#b4b4b4 0 1px,transparent 1px 2px)"></div>
<div class="a" style="left:1048px;top:632px;width:1px;height:19px;background:repeating-linear-gradient(to bottom,#b4b4b4 0 1px,transparent 1px 2px)"></div>
<div class="a" style="left:45px;top:635px;width:13px;height:13px;box-sizing:border-box;border:1px solid #222;background:#fff"></div>
<div class="a t" style="left:88px;top:635px;letter-spacing:0.08px;">Primary Site</div>
<div class="a t" style="left:187.5px;top:635px;letter-spacing:0.03px;">DemoDP</div>
<div class="a t" style="left:337.4px;top:634px;letter-spacing:0px;">MS Windows Event Loggin...</div>
<div class="a t" style="left:487.5px;top:635px;letter-spacing:0.03px;">SysMon002 WinEvtXML -...</div>
<div class="a t" style="left:635.7px;top:634px;letter-spacing:-0.1px;">12/12/2023&nbsp; 2:38:08.7...</div>
<div class="a t" style="left:759px;top:635px;letter-spacing:0.03px;">Event Forwarding</div>
<div class="a t" style="left:903px;top:635px;letter-spacing:0.03px;">LogRhythm Default</div>
<div class="a t" style="left:1053px;top:635px;letter-spacing:0.03px;">Yes</div>
<svg class="a" style="left:512px;top:469px" width="14" height="21" viewBox="0 0 14 21">
<path d="M0.5 0.5 L0.5 16 L4 12.8 L6.8 18.8 L9 17.9 L6.5 12 L11.5 11.5 Z" fill="#fff" stroke="#000" stroke-width="1"/></svg>
<div class="a" style="left:1119px;top:418px;width:1px;height:234px;background:#fdfdfd;"></div>
<div class="a" style="left:1120px;top:418px;width:16px;height:234px;background:#f0f0f0;"></div>
<div class="a" style="left:1120px;top:436px;width:15px;height:175px;background:#cdcdcd;"></div>
<svg class="a" style="left:1123px;top:425px" width="9" height="7" viewBox="0 0 9 7"><path d="M1 5.5 L4.5 2 L8 5.5" fill="none" stroke="#606060" stroke-width="1.8"/></svg>
<svg class="a" style="left:1123px;top:639px" width="9" height="7" viewBox="0 0 9 7"><path d="M1 1.5 L4.5 5 L8 1.5" fill="none" stroke="#606060" stroke-width="1.8"/></svg>
<div class="a" style="left:3px;top:652px;width:1132px;height:16px;background:#f0f0f0;"></div>
<div class="a" style="left:19px;top:652px;width:471px;height:15px;background:#cdcdcd;"></div>
<svg class="a" style="left:6px;top:655px" width="9" height="10" viewBox="0 0 9 10"><path d="M6.5 1.5 L2.5 5 L6.5 8.5" fill="none" stroke="#505050" stroke-width="1.9"/></svg>
<svg class="a" style="left:1106px;top:654px" width="9" height="10" viewBox="0 0 9 10"><path d="M2.5 1.5 L6.5 5 L2.5 8.5" fill="none" stroke="#505050" stroke-width="1.9"/></svg>
<div class="a" style="left:1px;top:668px;width:1135px;height:1px;background:#b4c4d4"></div>
<div class="a t d" style="left:7.20px;top:673px;font-size:12px;transform:scaleX(0.8927);">Showing 10 of 10</div>
<div class="a" style="left:11px;top:698px;width:73px;height:21px;background:#e1e1e1;box-sizing:border-box;border:1px solid #adadad;"></div>
<div class="a t d" style="left:24.02px;top:703px;font-size:12px;transform:scaleX(0.8800);">Advanced</div>
<div class="a" style="left:92px;top:698px;width:73px;height:21px;background:#e1e1e1;box-sizing:border-box;border:1px solid #adadad;"></div>
<div class="a t d" style="left:109.13px;top:703px;font-size:12px;transform:scaleX(0.8800);">Defaults</div>
<div class="a" style="left:892px;top:698px;width:73px;height:21px;background:#e1e1e1;box-sizing:border-box;border:2px solid #0078d7;"></div>
<div class="a t d" style="left:920.87px;top:703px;font-size:12px;transform:scaleX(0.8800);">OK</div>
<div class="a" style="left:973px;top:698px;width:73px;height:21px;background:#e1e1e1;box-sizing:border-box;border:1px solid #adadad;"></div>
<div class="a t d" style="left:993.06px;top:703px;font-size:12px;transform:scaleX(0.8800);">Cancel</div>
<div class="a" style="left:1054px;top:698px;width:73px;height:21px;background:#e1e1e1;box-sizing:border-box;border:1px solid #adadad;"></div>
<div class="a t d" style="left:1077.29px;top:703px;font-size:12px;transform:scaleX(0.8800);">Apply</div>
<div class="a" style="left:0;top:0;width:1px;height:730px;background:linear-gradient(#3a3a44,#3a3a44 48px,#666 50px,#6a6a6a)"></div>
<div class="a" style="left:1136px;top:30px;width:1px;height:700px;background:#9aa4b0"></div>
<div class="a" style="left:1137px;top:0;width:1px;height:730px;background:linear-gradient(#3a3a44,#3a3a44 10px,#56606c 12px,#56606c)"></div>
<div class="a" style="left:0;top:729px;width:1138px;height:1px;background:#6e6e6e"></div>
</body></html>
